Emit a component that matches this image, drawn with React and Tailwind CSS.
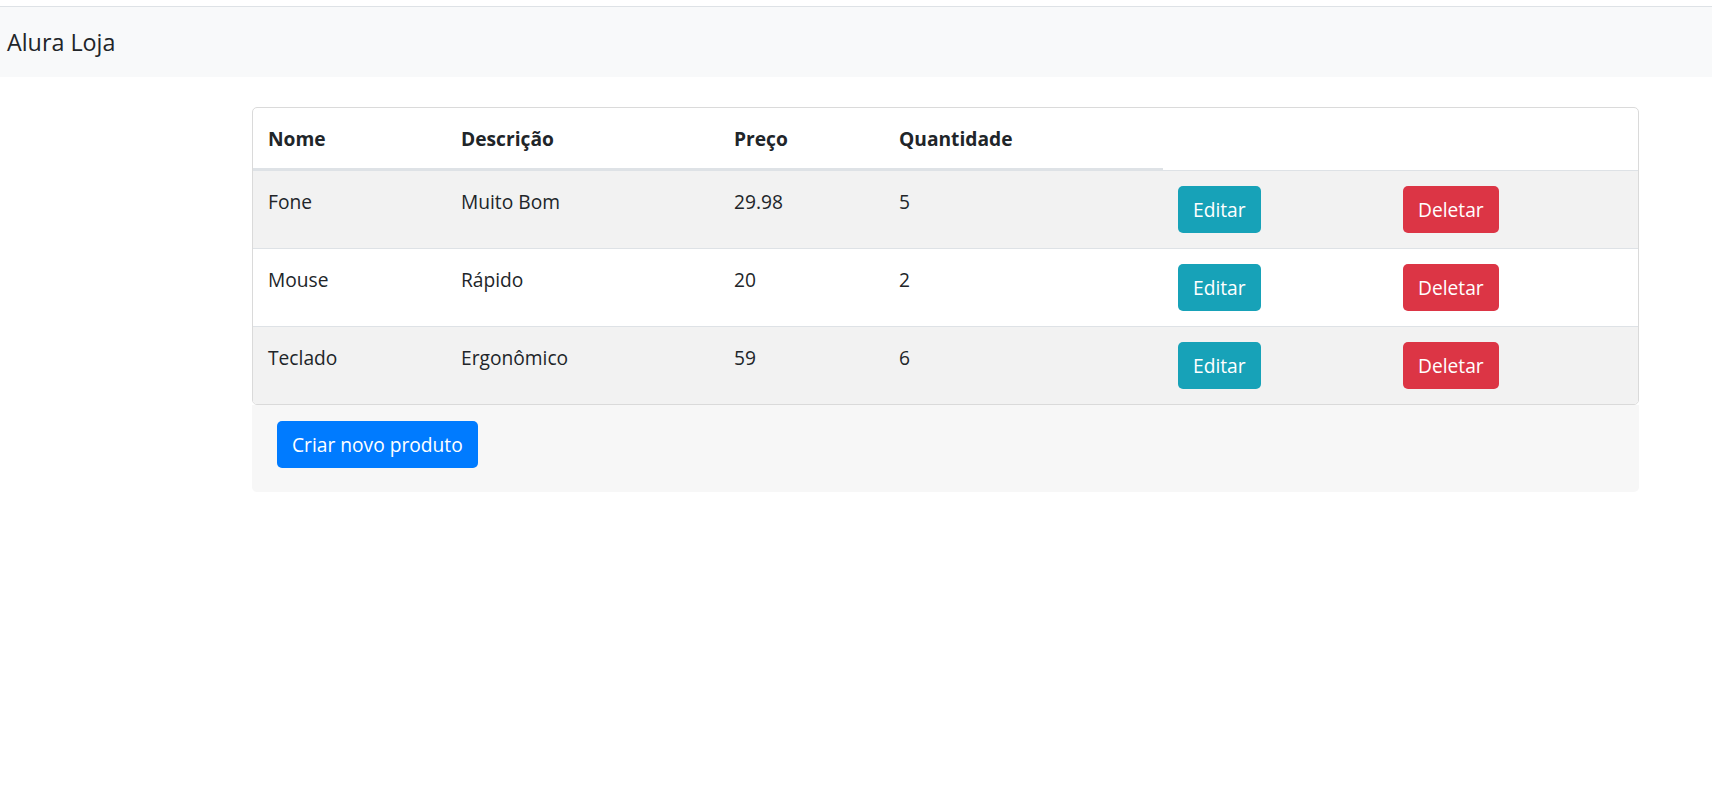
const products = [
  { nome: "Fone", descricao: "Muito Bom", preco: "29.98", quantidade: "5" },
  { nome: "Mouse", descricao: "Rápido", preco: "20", quantidade: "2" },
  { nome: "Teclado", descricao: "Ergonômico", preco: "59", quantidade: "6" },
]

const widths = ["w-[193px]", "w-[273px]", "w-[165px]", "w-[279px]", "w-[225px]", "w-[250px]"]

const ProductRow = ({ product, striped, last }) => {
  const cell = "align-top border-t border-[#dee2e6] px-[15px] pt-[16px] pb-[14px] leading-[30px]"
  return (
    <tr className={striped ? "bg-[#f2f2f2]" : "bg-white"}>
      <td className={cell}>{product.nome}</td>
      <td className={cell}>{product.descricao}</td>
      <td className={cell}>{product.preco}</td>
      <td className={cell}>{product.quantidade}</td>
      <td className="align-top border-t border-[#dee2e6] p-[15px]">
        <button className="h-[47px] px-[15px] rounded-[5px] bg-[#17a2b8] text-white leading-[30px]">
          Editar
        </button>
      </td>
      <td className="align-top border-t border-[#dee2e6] p-[15px]">
        <button className="h-[47px] px-[15px] rounded-[5px] bg-[#dc3545] text-white leading-[30px]">
          Deletar
        </button>
      </td>
    </tr>
  )
}

export default function App() {
  const th = "text-left font-bold align-top border-b-2 border-[#dee2e6] px-[15px] pt-[16px] pb-[14px] leading-[30px]"
  return (
    <div className="min-h-screen bg-white text-[#212529] text-[19.2px] font-['Open_Sans',sans-serif]">
      <div className="h-[6px]" />
      <nav className="h-[71px] border-t border-[#dee2e6] bg-[#f8f9fa] flex items-center pl-[7px]">
        <span className="text-[23.3px] leading-[35px]">Alura Loja</span>
      </nav>

      <main className="mt-[30px] ml-[252px] w-[1387px]">
        <div className="border border-[#dadada] rounded-[5px] overflow-hidden">
          <table className="w-full table-fixed border-separate border-spacing-0">
            <colgroup>
              {widths.map((w, i) => (
                <col key={i} className={w} />
              ))}
            </colgroup>
            <thead>
              <tr>
                <th className={th}>Nome</th>
                <th className={th}>Descrição</th>
                <th className={th}>Preço</th>
                <th className={th}>Quantidade</th>
              </tr>
            </thead>
            <tbody>
              {products.map((p, i) => (
                <ProductRow key={p.nome} product={p} striped={i % 2 === 0} />
              ))}
            </tbody>
          </table>
        </div>
        <div className="bg-[#f7f7f7] rounded-b-[5px] pt-[16px] pb-[24px] pl-[25px]">
          <button className="h-[47px] px-[15px] rounded-[5px] bg-[#007bff] text-white leading-[30px]">
            Criar novo produto
          </button>
        </div>
      </main>
    </div>
  )
}
